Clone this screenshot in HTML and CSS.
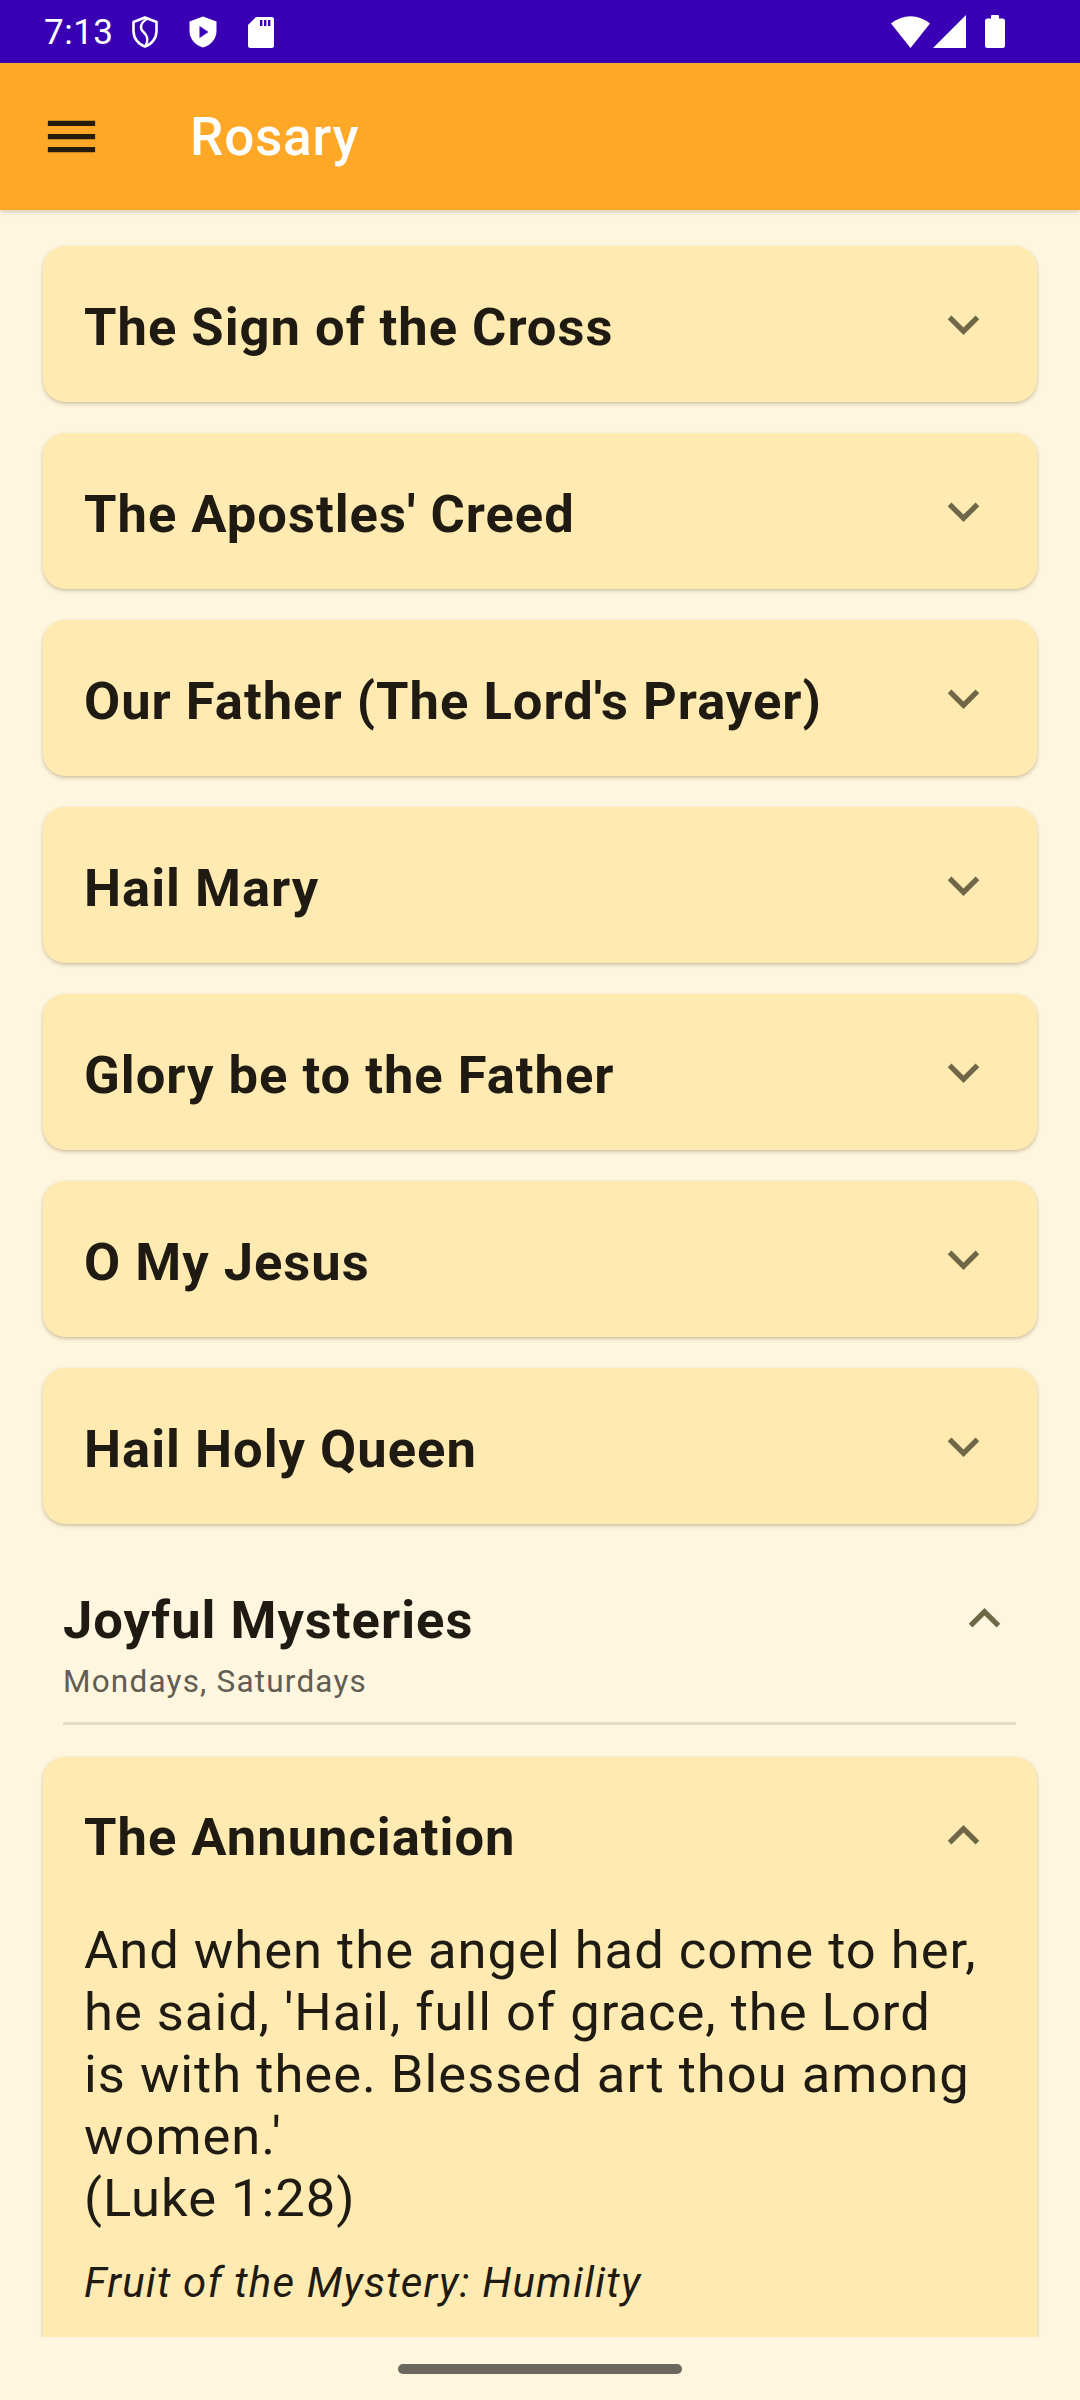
FILE: index.html
```html
<!DOCTYPE html>
<html lang="en">
<head>
<meta charset="utf-8">
<title>Rosary</title>
<link rel="stylesheet" href="styles.css">
</head>
<body>
<div class="screen">
  <div class="statusbar">
    <div class="sb-left">
      <span class="time">7:13</span>
      <svg class="sb-shield" width="28" height="32" viewBox="0 0 28 32"><path d="M14 1.5 L25.5 6 V15 C25.5 22.5 20.5 28.5 14 30.5 C7.5 28.5 2.5 22.5 2.5 15 V6 Z" fill="none" stroke="#fff" stroke-width="2.6" stroke-linejoin="round"/><path d="M16 3 C9 7 8.5 12.5 12.5 16 C16.5 19.5 17.5 24.5 14.5 30" fill="none" stroke="#fff" stroke-width="2.4" stroke-linecap="round"/></svg>
      <svg class="sb-play" width="30" height="32" viewBox="0 0 30 32"><path d="M15 0.5 L28.5 5.5 V15 C28.5 23 22.5 29.5 15 31.5 C7.5 29.5 1.5 23 1.5 15 V5.5 Z" fill="#fff"/><path d="M11.5 10 L20.5 16 L11.5 22 Z" fill="#3a00b3"/></svg>
      <svg class="sb-sd" width="26" height="31" viewBox="0 0 26 31"><path d="M8 0 H23.5 A2.5 2.5 0 0 1 26 2.5 V28.5 A2.5 2.5 0 0 1 23.5 31 H2.5 A2.5 2.5 0 0 1 0 28.5 V8 Z" fill="#fff"/><rect x="12" y="3" width="2.4" height="6" fill="#3a00b3"/><rect x="16" y="3" width="2.4" height="6" fill="#3a00b3"/><rect x="20" y="3" width="2.4" height="6" fill="#3a00b3"/></svg>
    </div>
    <div class="sb-right">
      <svg class="sb-wifi" width="39" height="33" viewBox="0 0 39 33"><path d="M0 8.5 A30 30 0 0 1 39 8.5 L19.5 33 Z" fill="#fff"/></svg>
      <svg class="sb-signal" width="33" height="33" viewBox="0 0 33 33"><path d="M33 0 V33 H0 Z" fill="#fff"/></svg>
      <svg class="sb-battery" width="20" height="33" viewBox="0 0 20 33"><rect x="6" y="0" width="8" height="5" rx="1" fill="#fff"/><rect x="0" y="3.5" width="20" height="29.5" rx="2.5" fill="#fff"/></svg>
    </div>
  </div>

  <header class="appbar">
    <svg class="menu-icon" width="63" height="63" viewBox="0 0 24 24"><path d="M3 18h18v-2H3v2zm0-5h18v-2H3v2zm0-7v2h18V6H3z" fill="#261c0b"/></svg>
    <h1 class="appbar-title">Rosary</h1>
  </header>

  <main class="content">
    <div class="card">
      <div class="card-head"><span class="card-title">The Sign of the Cross</span><svg class="chev" width="63" height="63" viewBox="0 0 24 24"><path d="M16.59 8.59L12 13.17 7.41 8.59 6 10l6 6 6-6z"/></svg></div>
    </div>
    <div class="card">
      <div class="card-head"><span class="card-title">The Apostles' Creed</span><svg class="chev" width="63" height="63" viewBox="0 0 24 24"><path d="M16.59 8.59L12 13.17 7.41 8.59 6 10l6 6 6-6z"/></svg></div>
    </div>
    <div class="card">
      <div class="card-head"><span class="card-title">Our Father (The Lord's Prayer)</span><svg class="chev" width="63" height="63" viewBox="0 0 24 24"><path d="M16.59 8.59L12 13.17 7.41 8.59 6 10l6 6 6-6z"/></svg></div>
    </div>
    <div class="card">
      <div class="card-head"><span class="card-title">Hail Mary</span><svg class="chev" width="63" height="63" viewBox="0 0 24 24"><path d="M16.59 8.59L12 13.17 7.41 8.59 6 10l6 6 6-6z"/></svg></div>
    </div>
    <div class="card">
      <div class="card-head"><span class="card-title">Glory be to the Father</span><svg class="chev" width="63" height="63" viewBox="0 0 24 24"><path d="M16.59 8.59L12 13.17 7.41 8.59 6 10l6 6 6-6z"/></svg></div>
    </div>
    <div class="card">
      <div class="card-head"><span class="card-title">O My Jesus</span><svg class="chev" width="63" height="63" viewBox="0 0 24 24"><path d="M16.59 8.59L12 13.17 7.41 8.59 6 10l6 6 6-6z"/></svg></div>
    </div>
    <div class="card">
      <div class="card-head"><span class="card-title">Hail Holy Queen</span><svg class="chev" width="63" height="63" viewBox="0 0 24 24"><path d="M16.59 8.59L12 13.17 7.41 8.59 6 10l6 6 6-6z"/></svg></div>
    </div>

    <section class="group">
      <div class="group-head">
        <div class="group-text">
          <div class="group-title">Joyful Mysteries</div>
          <div class="group-sub">Mondays, Saturdays</div>
        </div>
        <svg class="chev group-chev" width="63" height="63" viewBox="0 0 24 24"><path d="M12 8l-6 6 1.41 1.41L12 10.83l4.59 4.58L18 14z"/></svg>
      </div>
      <div class="divider"></div>
    </section>

    <div class="card card-open">
      <div class="card-head"><span class="card-title">The Annunciation</span><svg class="chev" width="63" height="63" viewBox="0 0 24 24"><path d="M12 8l-6 6 1.41 1.41L12 10.83l4.59 4.58L18 14z"/></svg></div>
      <div class="card-body">
        <p class="verse">And when the angel had come to her, he said, 'Hail, full of grace, the Lord is with thee. Blessed art thou among women.'<br>(Luke 1:28)</p>
        <p class="fruit">Fruit of the Mystery: Humility</p>
      </div>
    </div>
  </main>

  <div class="navbar"><div class="pill"></div></div>
</div>
</body>
</html>
```

FILE: styles.css
```css
* { box-sizing: border-box; }

html, body {
  margin: 0;
  padding: 0;
  background: #fef6df;
}

body {
  font-family: Roboto, "Noto Sans", "Liberation Sans", sans-serif;
  color: #1f1b12;
}

.screen {
  width: 1080px;
  height: 2400px;
  display: flex;
  flex-direction: column;
  overflow: hidden;
}

/* status bar */
.statusbar {
  height: 63px;
  flex: 0 0 63px;
  background: #3a00b3;
  display: flex;
  align-items: center;
  justify-content: space-between;
  padding: 0 75px 0 44px;
}

.sb-left, .sb-right {
  display: flex;
  align-items: center;
}

.time {
  color: #fff;
  font-size: 35px;
  font-weight: 400;
  line-height: 41px;
  margin-top: 1px;
  letter-spacing: 0.5px;
}

.sb-shield { margin-left: 17px; margin-top: 1px; }
.sb-play { margin-left: 29px; margin-top: 1px; }
.sb-sd { margin-left: 30px; margin-top: 1px; }

.sb-signal { margin-left: 3px; }
.sb-battery { margin-left: 19px; }

/* app bar */
.appbar {
  height: 147px;
  flex: 0 0 147px;
  background: #ffa828;
  display: flex;
  align-items: center;
  padding-left: 40px;
  position: relative;
  z-index: 2;
  box-shadow: 0 2px 5px rgba(0, 0, 0, 0.18);
}

.menu-icon { display: block; }

.appbar-title {
  margin: 0 0 0 87px;
  color: #fff;
  font-size: 53px;
  font-weight: 500;
  line-height: 62px;
  letter-spacing: 0.8px;
}

/* content */
.content {
  height: 2127px;
  flex: 0 0 2127px;
  overflow: hidden;
  padding: 36px 43px 0;
}

.card {
  background: #ffebb1;
  border-radius: 22px;
  box-shadow: 0 2px 4px rgba(90, 70, 20, 0.22), 0 1px 2px rgba(90, 70, 20, 0.12);
  margin-bottom: 31px;
}

.card-head {
  display: flex;
  align-items: center;
  justify-content: space-between;
  height: 156px;
  padding: 0 42px 0 41px;
}

.card-title {
  font-size: 52.5px;
  font-weight: 700;
  line-height: 62px;
  letter-spacing: 1px;
  padding-top: 5px;
  color: #1f1b12;
}

.chev {
  display: block;
  flex: 0 0 63px;
  fill: #6f6748;
}

/* group header */
.group {
  padding: 34px 21px 0 20px;
  margin-bottom: 32px;
}

.group-head {
  display: flex;
  justify-content: space-between;
  align-items: flex-start;
}

.group-title {
  font-size: 52.5px;
  font-weight: 700;
  line-height: 62px;
  letter-spacing: 1px;
  color: #1f1b12;
}

.group-sub {
  margin-top: 12px;
  font-size: 31.5px;
  line-height: 37px;
  letter-spacing: 1.2px;
  color: #625d52;
}

.group-chev {
  margin-top: -2px;
}

.divider {
  margin-top: 22px;
  height: 3px;
  background: #e4dcc8;
}

/* open card */
.card-open .card-head {
  height: auto;
  align-items: flex-start;
  padding: 44px 42px 44px 41px;
}

.card-open .card-head .chev {
  margin-top: 3px;
}

.card-body {
  padding: 7px 58px 60px 41px;
}

.verse {
  margin: 0;
  font-size: 52.5px;
  line-height: 62px;
  font-weight: 400;
  letter-spacing: 1px;
  color: #1f1b12;
}

.fruit {
  margin: 29px 0 0;
  font-size: 42px;
  line-height: 49px;
  font-style: italic;
  letter-spacing: 1.2px;
  color: #1f1b12;
}

/* nav bar */
.navbar {
  height: 63px;
  flex: 0 0 63px;
  background: #fef6df;
  display: flex;
  justify-content: center;
  padding-top: 27px;
}

.pill {
  width: 284px;
  height: 10px;
  border-radius: 5px;
  background: #6b675d;
}
```
